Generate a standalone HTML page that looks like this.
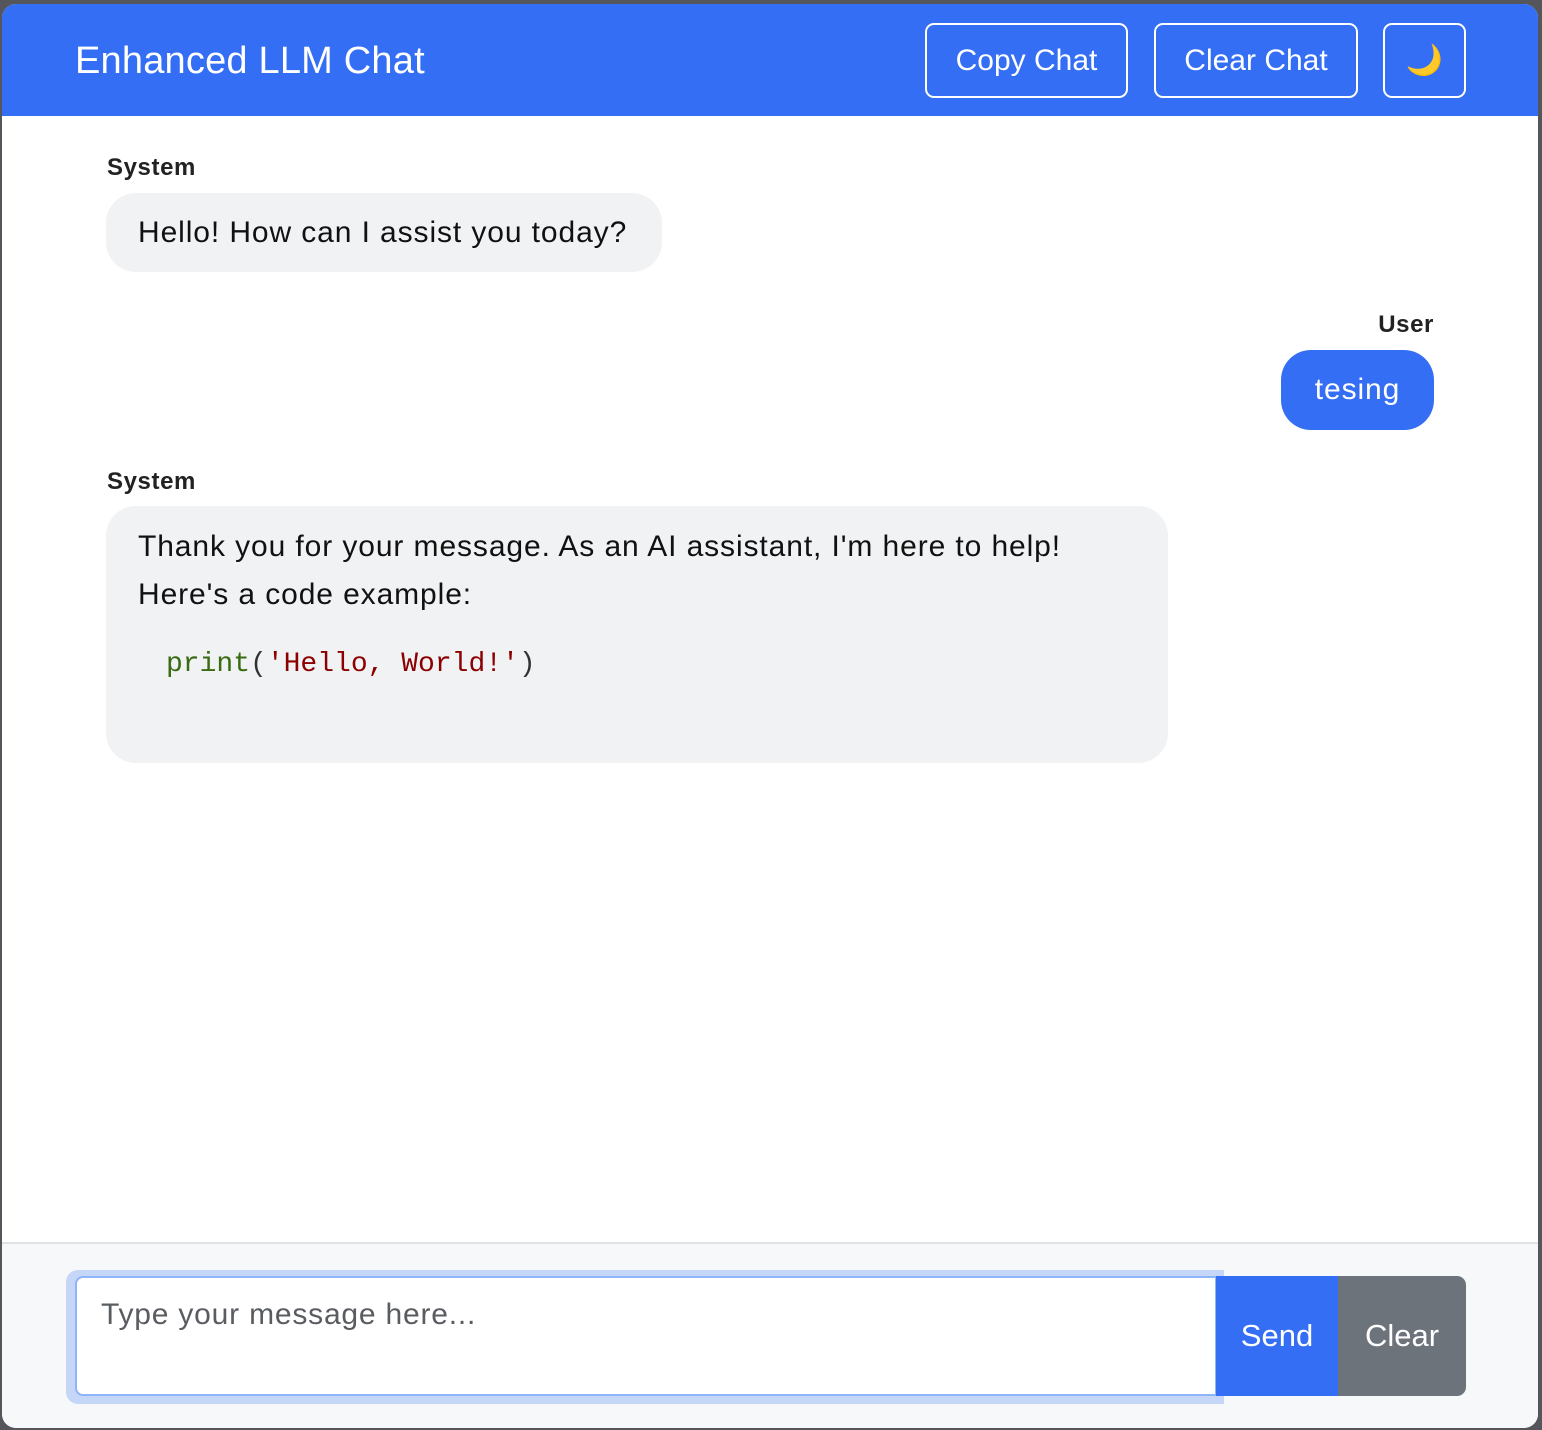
<!DOCTYPE html>
<html><head><style>
*{box-sizing:border-box;margin:0;padding:0}
body{width:1542px;height:1430px;background:#55565b;font-family:"Liberation Sans",sans-serif;position:relative;overflow:hidden}
.win{position:absolute;left:2px;top:4px;width:1536px;height:1424px;background:#fff;border-radius:14px;overflow:hidden}
.hdr{position:absolute;left:0;top:0;width:100%;height:112px;background:#346ef4}
.title{position:absolute;left:73px;top:36px;color:#fff;font-size:38px;line-height:42px;letter-spacing:0.2px}
.hb{position:absolute;top:19px;height:75px;border:2px solid #fff;border-radius:9px;color:#fff;font-size:30px;line-height:71px;text-align:center}
.lbl{position:absolute;font-weight:bold;font-size:24px;color:#222;letter-spacing:0.6px}
.bub{position:absolute;background:#f1f2f4;border-radius:30px;font-size:30px;letter-spacing:0.9px;color:#111;padding:0 32px;white-space:nowrap}
.ftr{position:absolute;left:0;top:1238px;width:100%;height:186px;background:#f7f8fa;border-top:2px solid #dfe1e5}
</style></head><body>
<div class="win">
<div class="hdr">
<div class="title">Enhanced LLM Chat</div>
<div class="hb" style="left:923px;width:203px">Copy Chat</div>
<div class="hb" style="left:1152px;width:204px">Clear Chat</div>
<div class="hb" style="left:1381px;width:83px;color:#f5c842">🌙</div>
</div>
<div class="lbl" style="left:105px;top:150px">System</div>
<div class="bub" style="left:104px;top:189px;width:556px;height:79px;line-height:79px">Hello! How can I assist you today?</div>
<div class="lbl" style="right:104px;top:307px">User</div>
<div class="bub" style="left:1279px;top:346px;width:153px;height:80px;line-height:80px;background:#346ef4;color:#fff;text-align:center;padding:0">tesing</div>
<div class="lbl" style="left:105px;top:464px">System</div>
<div class="bub" style="left:104px;top:502px;width:1062px;height:257px;line-height:48px;padding-top:17px">Thank you for your message. As an AI assistant, I'm here to help!<br>Here's a code example:
<div style="font-family:'Liberation Mono',monospace;font-size:28px;letter-spacing:0;margin-top:22px;margin-left:28px;color:#333"><span style="color:#3a6b12">print</span>(<span style="color:#8b0000">'Hello, World!'</span>)</div></div>
<div class="ftr">
<div style="position:absolute;left:64px;top:26px;width:1158px;height:134px;background:#c5d6f7;border-radius:12px 0 0 12px"></div>
<div style="position:absolute;left:73px;top:32px;width:1142px;height:120px;background:#fff;border:2px solid #90b4f8;border-radius:8px 0 0 8px;font-size:30px;letter-spacing:0.8px;color:#595c60;padding:20px 24px">Type your message here...</div>
<div style="position:absolute;left:1214px;top:32px;width:122px;height:120px;background:#346ef4;color:#fff;font-size:31px;line-height:120px;text-align:center">Send</div>
<div style="position:absolute;left:1336px;top:32px;width:128px;height:120px;background:#6c737b;color:#fff;font-size:31px;line-height:120px;text-align:center;border-radius:0 9px 9px 0">Clear</div>
</div>
</div>
</body></html>
